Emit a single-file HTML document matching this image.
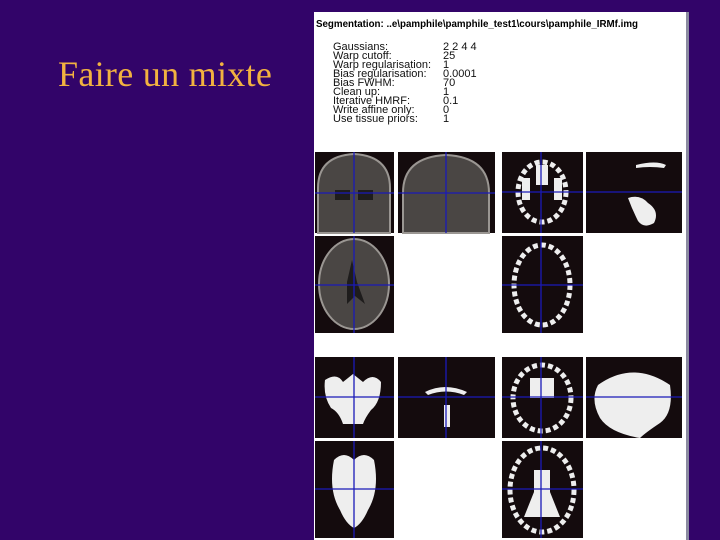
<!DOCTYPE html>
<html><head><meta charset="utf-8"><style>
html,body{margin:0;padding:0}
body{width:720px;height:540px;background:#320469;position:relative;overflow:hidden}
.t{position:absolute;left:58px;top:53px;font:36px "Liberation Serif",serif;color:#f2b240;white-space:nowrap;letter-spacing:0.3px}
</style></head><body>
<div class="t">Faire un mixte</div>
<svg style="position:absolute;left:0;top:0" width="720" height="540">
<rect x="314" y="12" width="374" height="528" fill="#fff"/>
<rect x="686" y="12" width="3" height="528" fill="#8a8aa0"/>
<text x="316" y="27" font-family="Liberation Sans" font-weight="bold" font-size="10" fill="#000" textLength="322" lengthAdjust="spacingAndGlyphs">Segmentation: ..e\pamphile\pamphile_test1\cours\pamphile_IRMf.img</text>
<g font-family="Liberation Sans" font-size="11" fill="#111">
<text x="333" y="50">Gaussians:</text><text x="443" y="50">2 2 4 4</text>
<text x="333" y="59">Warp cutoff:</text><text x="443" y="59">25</text>
<text x="333" y="68">Warp regularisation:</text><text x="443" y="68">1</text>
<text x="333" y="77">Bias regularisation:</text><text x="443" y="77">0.0001</text>
<text x="333" y="86">Bias FWHM:</text><text x="443" y="86">70</text>
<text x="333" y="95">Clean up:</text><text x="443" y="95">1</text>
<text x="333" y="104">Iterative HMRF:</text><text x="443" y="104">0.1</text>
<text x="333" y="113">Write affine only:</text><text x="443" y="113">0</text>
<text x="333" y="122">Use tissue priors:</text><text x="443" y="122">1</text>
</g>
<g fill="#140b0d">
<rect x="315" y="152" width="79" height="81"/><rect x="398" y="152" width="97" height="81"/><rect x="502" y="152" width="81" height="81"/><rect x="586" y="152" width="96" height="81"/>
<rect x="315" y="236" width="79" height="97"/><rect x="502" y="236" width="81" height="97"/>
<rect x="315" y="357" width="79" height="81"/><rect x="398" y="357" width="97" height="81"/><rect x="502" y="357" width="81" height="81"/><rect x="586" y="357" width="96" height="81"/>
<rect x="315" y="441" width="79" height="97"/><rect x="502" y="441" width="81" height="97"/>
</g>
<g fill="#4a4644" stroke="#9a9692" stroke-width="2">
<path d="M318 233 v-45 q0 -32 36 -34 q36 2 36 34 v45z"/>
<path d="M403 233 v-40 q0 -36 43 -38 q43 2 43 38 v40z"/>
<ellipse cx="354" cy="284" rx="35" ry="45"/>
</g>
<g fill="#1e1c1c">
<path d="M347 282 l5 -22 l5 22 l8 22 l-10 -8 l-8 8z"/>
<path d="M335 190 h15 v10 h-15z M358 190 h15 v10 h-15z"/>
</g>
<g fill="none" stroke="#eee" stroke-width="5" stroke-dasharray="5 3">
<ellipse cx="542" cy="192" rx="24" ry="30"/>
<ellipse cx="542" cy="285" rx="28" ry="40"/>
<ellipse cx="542" cy="398" rx="29" ry="33"/>
<ellipse cx="542" cy="490" rx="32" ry="42"/>
</g>
<g fill="#eee">
<path d="M636 165 q20 -5 30 0 l-2 3 q-14 -2 -28 0z"/>
<path d="M628 198 q12 -4 20 5 q12 8 6 20 q-10 6 -16 -2 q-6 -12 -10 -23z"/>
<path d="M522 178 h8 v22 h-8z M554 178 h8 v22 h-8z M536 165 h12 v20 h-12z"/>
<path d="M325 380 q12 -8 18 2 l10 -8 l10 8 q10 -10 18 0 q0 20 -10 28 q-6 8 -8 14 h-20 q-4 -12 -12 -16 q-8 -12 -6 -28z"/>
<path d="M425 392 q20 -10 42 0 l-3 3 q-18 -7 -36 0z"/>
<path d="M444 405 h6 v22 h-6z"/>
<path d="M530 378 h24 v20 h-24z"/>
<path d="M598 385 q35 -25 72 0 q4 28 -10 38 q-15 10 -20 15 q-30 -5 -40 -20 q-10 -18 -2 -33z"/>
<path d="M334 460 q10 -10 20 0 q10 -10 20 0 q6 30 -6 50 q-6 14 -14 18 q-8 -4 -14 -18 q-12 -20 -6 -50z"/>
<path d="M534 470 h16 v22 l10 25 h-36 l10 -25z"/>
</g>
<g stroke="#1a1ab8" stroke-width="1.3">
<line x1="315" y1="193" x2="394" y2="193"/><line x1="354" y1="152" x2="354" y2="233"/>
<line x1="398" y1="193" x2="495" y2="193"/><line x1="446" y1="152" x2="446" y2="233"/>
<line x1="502" y1="192" x2="583" y2="192"/><line x1="541" y1="152" x2="541" y2="233"/>
<line x1="586" y1="192" x2="682" y2="192"/>
<line x1="315" y1="285" x2="394" y2="285"/><line x1="354" y1="236" x2="354" y2="333"/>
<line x1="502" y1="285" x2="583" y2="285"/><line x1="541" y1="236" x2="541" y2="333"/>
<line x1="315" y1="397" x2="394" y2="397"/><line x1="354" y1="357" x2="354" y2="438"/>
<line x1="398" y1="397" x2="495" y2="397"/><line x1="446" y1="357" x2="446" y2="438"/>
<line x1="502" y1="397" x2="583" y2="397"/><line x1="541" y1="357" x2="541" y2="438"/>
<line x1="586" y1="397" x2="682" y2="397"/>
<line x1="315" y1="489" x2="394" y2="489"/><line x1="354" y1="441" x2="354" y2="538"/>
<line x1="502" y1="489" x2="583" y2="489"/><line x1="541" y1="441" x2="541" y2="538"/>
</g>
</svg>
</body></html>
